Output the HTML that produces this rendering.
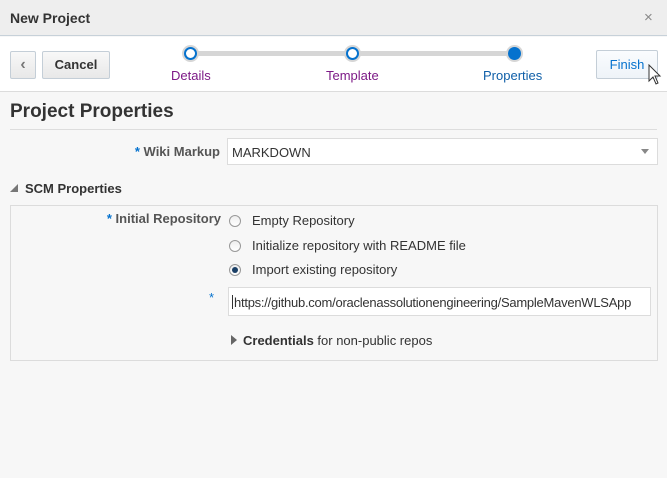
<!DOCTYPE html>
<html><head><style>
*{margin:0;padding:0;box-sizing:border-box}
body{width:667px;height:478px;background:#f7f7f7;font-family:"Liberation Sans",sans-serif;font-size:13px;color:#333;position:relative;overflow:hidden}
.a{position:absolute}
.btn{position:absolute;border:1px solid #c4ced7;background:linear-gradient(#f8f8f8,#e8e8e8);border-radius:2px;font-weight:bold;font-size:13px;text-align:center;color:#333}
.radio{position:absolute;width:12px;height:12px;border-radius:50%;border:1px solid #999;background:linear-gradient(#eee,#fff)}
.star{color:#0572ce;font-size:13px}
</style></head><body>
<div class="a" style="left:0;top:0;width:667px;height:36px;background:#eeeeee;border-bottom:1px solid #c7d1d9"></div>
<div class="a" style="left:10px;top:10px;font-weight:bold;font-size:14px;color:#333">New Project</div>
<div class="a" style="left:644px;top:9px;font-size:15px;color:#888">×</div>
<div class="a" style="left:0;top:37px;width:667px;height:55px;background:#fff;border-bottom:1px solid #dcdcdc"></div>
<div class="btn" style="left:10px;top:51px;width:26px;height:28px;line-height:26px;color:#777;font-size:16px">‹</div>
<div class="btn" style="left:42px;top:51px;width:68px;height:28px;line-height:26px">Cancel</div>
<div class="btn" style="left:596px;top:50px;width:62px;height:29px;line-height:27px;color:#0572ce;font-weight:normal;background:linear-gradient(#fafcfe,#eef3f8)">Finish</div>
<svg class="a" style="left:648px;top:64px" width="16" height="24" viewBox="0 0 16 24"><path d="M1 1 L1 17 L5 13 L8 20 L10 19 L7 12 L12 12 Z" fill="#fff" stroke="#333" stroke-width="1"/></svg>
<div class="a" style="left:190px;top:51px;width:324px;height:5px;background:#d6d6d6"></div>
<div class="a" style="left:182px;top:45px;width:17px;height:17px;border-radius:50%;background:#d6d6d6"></div>
<div class="a" style="left:184px;top:47px;width:13px;height:13px;border-radius:50%;background:#fff;border:2px solid #0572ce"></div>
<div class="a" style="left:344px;top:45px;width:17px;height:17px;border-radius:50%;background:#d6d6d6"></div>
<div class="a" style="left:346px;top:47px;width:13px;height:13px;border-radius:50%;background:#fff;border:2px solid #0572ce"></div>
<div class="a" style="left:506px;top:45px;width:17px;height:17px;border-radius:50%;background:#d6d6d6"></div>
<div class="a" style="left:508px;top:47px;width:13px;height:13px;border-radius:50%;background:#0572ce"></div>
<div class="a" style="left:171px;top:68px;color:#7d1a87">Details</div>
<div class="a" style="left:326px;top:68px;color:#7d1a87">Template</div>
<div class="a" style="left:483px;top:68px;color:#0f5fa8">Properties</div>
<div class="a" style="left:10px;top:101px;font-weight:bold;font-size:19px;color:#333">Project Properties</div>
<div class="a" style="left:10px;top:129px;width:647px;height:1px;background:#ddd"></div>
<div class="a" style="left:100px;top:144px;width:120px;text-align:right;font-weight:bold;color:#555"><span class="star">*</span> Wiki Markup</div>
<div class="a" style="left:227px;top:138px;width:431px;height:27px;background:#fff;border:1px solid #dcdcdc;padding:6px 4px;color:#333">MARKDOWN</div>
<div class="a" style="left:641px;top:149px;width:0;height:0;border-left:4px solid transparent;border-right:4px solid transparent;border-top:5px solid #888"></div>
<div class="a" style="left:10px;top:184px;width:0;height:0;border-left:8px solid transparent;border-bottom:8px solid #777"></div>
<div class="a" style="left:25px;top:181px;font-weight:bold;color:#333">SCM Properties</div>
<div class="a" style="left:10px;top:205px;width:648px;height:156px;border:1px solid #dcdcdc;background:#f7f7f7"></div>
<div class="a" style="left:80px;top:211px;width:141px;text-align:right;font-weight:bold;color:#555"><span class="star">*</span> Initial Repository</div>
<div class="radio" style="left:229px;top:215px"></div>
<div class="a" style="left:252px;top:213px">Empty Repository</div>
<div class="radio" style="left:229px;top:240px"></div>
<div class="a" style="left:252px;top:238px">Initialize repository with README file</div>
<div class="radio" style="left:229px;top:264px"></div>
<div class="a" style="left:232px;top:267px;width:6px;height:6px;border-radius:50%;background:#1a3f66"></div>
<div class="a" style="left:252px;top:262px">Import existing repository</div>
<div class="a" style="left:209px;top:290px" ><span class="star">*</span></div>
<div class="a" style="left:228px;top:287px;width:423px;height:29px;background:#fff;border:1px solid #dcdcdc;padding:7px 3px;color:#333;white-space:nowrap;overflow:hidden;letter-spacing:-0.25px"><span style="display:inline-block;width:1px;height:14px;background:#333;vertical-align:-2px;margin-right:1px"></span>https://github.com/oraclenassolutionengineering/SampleMavenWLSApp</div>
<div class="a" style="left:231px;top:335px;width:0;height:0;border-top:5px solid transparent;border-bottom:5px solid transparent;border-left:6px solid #666"></div>
<div class="a" style="left:243px;top:333px"><b>Credentials</b> for non-public repos</div>
</body></html>
